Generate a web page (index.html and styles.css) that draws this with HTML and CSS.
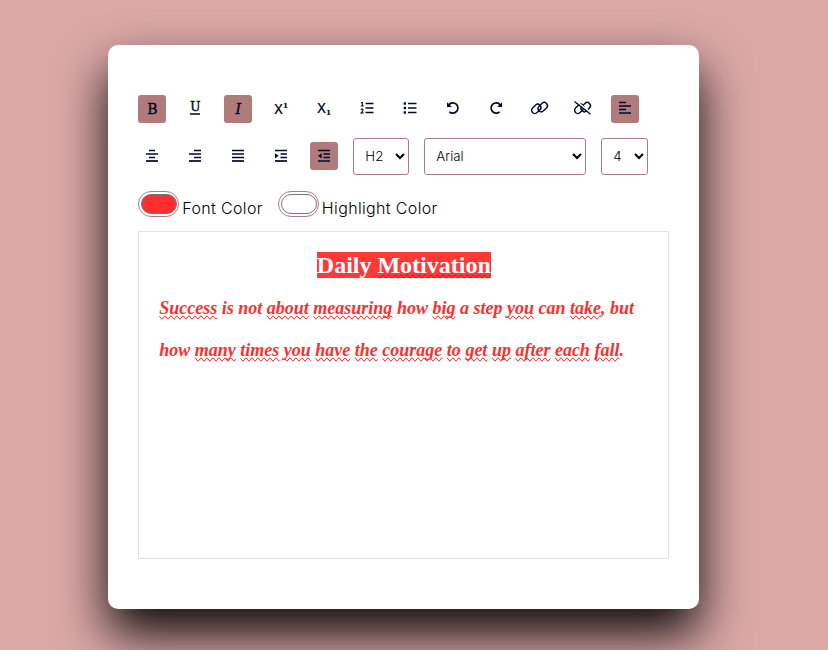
FILE: index.html
```html
<!DOCTYPE html>
<html lang="en">
<head>
<meta charset="utf-8">
<title>Text Editor</title>
<link rel="stylesheet" href="styles.css">
</head>
<body>
<main class="container">
  <div class="options">
    <button class="option active"><span class="letter">B</span></button>
    <button class="option"><span class="letter underline">U</span></button>
    <button class="option active"><span class="letter italic">I</span></button>
    <button class="option"><span class="script">X<sup>1</sup></span></button>
    <button class="option"><span class="script">X<sub>1</sub></span></button>
    <button class="option"><svg viewBox="0 0 14 14"><path d="M5.500 2.500H13.500M5.500 7H13.500M5.500 11.500H13.500"/><path class="thin" d="M1 1.500H2.300V5M.8 5H3.800M.9 8.800C1.500 7.800 3.300 8 3 9.400C2.800 10.200 1.800 11 1 12H3.800"/></svg></button>
    <button class="option"><svg viewBox="0 0 14 14"><path d="M5 2.500H13.500M5 7H13.500M5 11.500H13.500"/><path d="M.7 2.500H3M.7 7H3M.7 11.500H3" stroke-width="2.3"/></svg></button>
    <button class="option"><svg viewBox="0 0 14 14"><path d="M3 3.600A5.100 5.100 0 1 1 3.400 10.800"/><path class="solid" d="M1 1.200V6H5.800Z"/></svg></button>
    <button class="option"><svg viewBox="0 0 14 14"><path d="M11 3.600A5.100 5.100 0 1 0 10.600 10.800"/><path class="solid" d="M13 1.200V6H8.200Z"/></svg></button>
    <button class="option"><svg class="wide" viewBox="0 0 17 14"><rect x="0" y="4.700" width="10.500" height="6.400" rx="3.200" transform="rotate(-45 5.250 7.900)"/><rect x="6.500" y="2.900" width="10.500" height="6.400" rx="3.200" transform="rotate(-45 11.750 6.100)"/></svg></button>
    <button class="option"><svg class="wide" viewBox="0 0 17 14"><rect x="0" y="4.700" width="10.500" height="6.400" rx="3.200" transform="rotate(-45 5.250 7.900)"/><rect x="6.500" y="2.900" width="10.500" height="6.400" rx="3.200" transform="rotate(-45 11.750 6.100)"/><path d="M1.500 -.3L17.300 12.200" class="cut"/><path d="M.5 .5L16.500 13.200"/></svg></button>
    <button class="option active"><svg viewBox="0 0 14 14"><path d="M1 1.500H8M1 5H13M1 8.500H8"/><path class="base" d="M1 12H13"/></svg></button>
    <button class="option"><svg viewBox="0 0 14 14"><path d="M4 1.500H10M1 5H13M4 8.500H10"/><path class="base" d="M1 12H13"/></svg></button>
    <button class="option"><svg viewBox="0 0 14 14"><path d="M6 1.500H13M1 5H13M6 8.500H13"/><path class="base" d="M1 12H13"/></svg></button>
    <button class="option"><svg viewBox="0 0 14 14"><path d="M1 1.500H13M1 5H13M1 8.500H13"/><path class="base" d="M1 12H13"/></svg></button>
    <button class="option"><svg viewBox="0 0 14 14"><path d="M1 1.500H13M6.500 5H13M6.500 8.500H13"/><path class="base" d="M1 12H13"/><path class="solid" d="M1 4.200L4.700 6.800L1 9.400Z"/></svg></button>
    <button class="option active"><svg viewBox="0 0 14 14"><path d="M1 1.500H13M6.500 5H13M6.500 8.500H13"/><path class="base" d="M1 12H13"/><path class="solid" d="M4.700 4.200L1 6.800L4.700 9.400Z"/></svg></button>
    <select class="heading" aria-label="Heading"><option>H2</option></select>
    <select class="family" aria-label="Font"><option>Arial</option></select>
    <select class="size" aria-label="Size"><option>4</option></select>
    <div class="color"><span class="swatch"><span class="fill red"></span></span><label>Font Color</label></div>
    <div class="color"><span class="swatch"><span class="fill"></span></span><label>Highlight Color</label></div>
  </div>
  <div class="editor">
    <h2><span class="mark">Daily <u>Motivation</u></span></h2>
    <p><u>Success</u> is not <u>about</u> <u>measuring</u> how <u>big</u> a step <u>you</u> can <u>take</u>, but<br>how <u>many</u> <u>times</u> <u>you</u> <u>have</u> <u>the</u> <u>courage</u> <u>to</u> <u>get</u> <u>up</u> <u>after</u> <u>each</u> <u>fall</u>.</p>
  </div>
</main>
</body>
</html>
```

FILE: styles.css
```css
* {
  box-sizing: border-box;
  margin: 0;
  padding: 0;
}

body {
  height: 650px;
  overflow: hidden;
  background: #dba8a7;
  color: #000;
  font-family: Inter, sans-serif;
}

.container {
  width: 591px;
  height: 564px;
  margin: 44.5px 0 0 108.3px;
  padding: 50px 30px;
  border-radius: 10px;
  background: #fff;
  box-shadow: 0 25px 50px rgba(0, 0, 0, .95);
}

.options {
  display: flex;
  flex-wrap: wrap;
  align-items: center;
  gap: 15px;
}

.option {
  display: grid;
  place-items: center;
  width: 28px;
  height: 28px;
  border: 0;
  border-radius: 3px;
  background: #fff;
  color: #020929;
}

.active {
  background: #b27b7b;
}

.option svg {
  width: 14px;
  height: 14px;
  margin-top: -1px;
  overflow: visible;
  fill: none;
  stroke: currentColor;
  stroke-width: 1.7;
}

.option svg.wide {
  width: 17px;
  stroke-width: 1.4;
}

.option .thin {
  stroke-width: 1.2;
}

.option .base {
  stroke: #262a42;
  stroke-width: 2;
}

.option .solid {
  fill: currentColor;
  stroke: none;
}

.option .cut {
  stroke: #fff;
  stroke-width: 1.5;
}

.letter {
  font: 14px/14px "DejaVu Serif", serif;
  -webkit-text-stroke: .4px currentColor;
}

.underline {
  height: 13px;
  border-bottom: 2px solid #41444f;
  font-size: 12px;
  line-height: 11px;
}

.italic {
  font-style: italic;
}

.script {
  font: 500 14px/14px "Noto Sans", sans-serif;
  white-space: nowrap;
}

.script sup,
.script sub {
  font: bold 8px/1 "DejaVu Serif", serif;
}

.script sub {
  vertical-align: -2px;
}

select {
  height: 37px;
  padding: 7px;
  border: 1px solid #b27b7b;
  border-radius: 3px;
  background: #fff;
  color: #000;
  font: 350 13.3px Inter, sans-serif;
}

.heading {
  width: 56px;
}

.family {
  width: 162px;
}

.size {
  width: 47px;
}

.color {
  display: flex;
  height: 27px;
  gap: 3px;
}

.color label {
  padding-top: 6px;
  font-size: 16px;
  font-weight: 350;
  letter-spacing: .35px;
  line-height: 24px;
  white-space: nowrap;
}

.swatch {
  width: 41px;
  height: 26px;
  margin-top: 1px;
  padding: 2px;
  border: 1px solid #b27b7b;
  border-radius: 15px;
}

.fill {
  display: block;
  width: 36px;
  height: 20px;
  border: 1px solid #777;
  border-radius: 10px;
}

.red {
  background: #ff2e2e;
}

.editor {
  height: 328px;
  margin-top: 14px;
  padding: 19px 20px;
  border: 1px solid #e2e2e2;
  color: #ff2e2e;
  font-family: "Liberation Serif", serif;
}

.editor h2 {
  color: #fff;
  font-size: 24px;
  line-height: 28px;
  text-align: center;
}

.mark {
  background: #ff3838;
}

.editor p {
  margin-top: 8px;
  font-size: 18px;
  font-style: italic;
  font-weight: bold;
  line-height: 42px;
}

.editor u {
  text-decoration-line: spelling-error;
}
```
